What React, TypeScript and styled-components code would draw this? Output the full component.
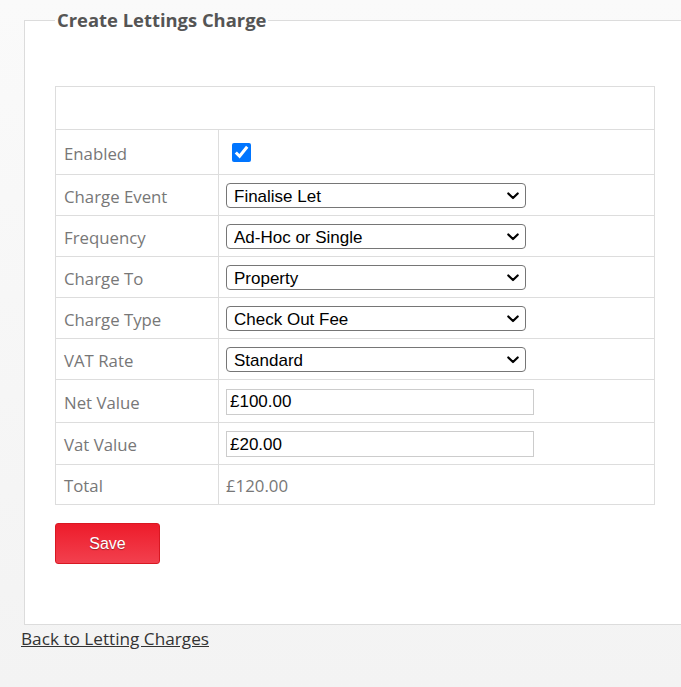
import React from "react";
import styled, { createGlobalStyle } from "styled-components";

const Global = createGlobalStyle`
  html, body { margin: 0; padding: 0; }
  body {
    background: linear-gradient(#fafafa 0px, #f3f3f3 687px);
    min-height: 687px;
    overflow: hidden;
    font-family: "Segoe UI", "Open Sans", sans-serif;
  }
`;

const Page = styled.div`
  padding: 8px 0 0 21px;
  width: 720px;
`;

const Fieldset = styled.fieldset`
  margin: 0 0 0 3px;
  padding: 54px 30px 60px 30px;
  border: 1px solid #dcdcdc;
  background: #fff;
  width: 660px;
  box-sizing: border-box;
  min-height: 602px;
`;

const Legend = styled.legend`
  font-family: "Open Sans", sans-serif;
  font-weight: 700;
  font-size: 18.4px;
  color: #555;
  padding: 0 2px;
  line-height: 24px;
`;

const Table = styled.table`
  border-collapse: collapse;
  width: 600px;
  font-family: "Open Sans", sans-serif;
`;

const Row = styled.tr<{ $h: number }>`
  height: ${(p) => p.$h}px;
`;

const EmptyCell = styled.td`
  border: 1px solid #dddddd;
`;

const LabelCell = styled.td`
  border: 1px solid #dddddd;
  width: 146px;
  padding: 2px 8px 0;
  color: #777;
  font-size: 16.8px;
  vertical-align: middle;
`;

const ValueCell = styled.td`
  border: 1px solid #dddddd;
  padding: 1px 7px 0;
  color: #777;
  font-size: 16.8px;
  vertical-align: middle;
`;

const SelectWrap = styled.div`
  position: relative;
  width: 300px;
  height: 25px;
`;

const Select = styled.select`
  appearance: none;
  -webkit-appearance: none;
  width: 300px;
  height: 25px;
  box-sizing: border-box;
  border: 1px solid #767676;
  border-radius: 4px;
  background: #fff;
  padding: 1px 24px 0 7px;
  font-family: "Liberation Sans", Arial, sans-serif;
  font-size: 17px;
  color: #000;
  display: block;
  outline: none;
`;

const Chevron = styled.svg`
  position: absolute;
  right: 7px;
  top: 9px;
  width: 12px;
  height: 8px;
  pointer-events: none;
`;

const Input = styled.input`
  width: 308px;
  height: 26px;
  box-sizing: border-box;
  border: 1px solid #cccccc;
  font-family: "Liberation Sans", Arial, sans-serif;
  font-size: 17px;
  color: #000;
  padding: 1px 3px 0;
  display: block;
  outline: none;
`;

const Check = styled.input`
  width: 19px;
  height: 19px;
  margin: 0 0 0 6px;
  display: block;
`;

const SaveButton = styled.button`
  margin-top: 18px;
  width: 105px;
  height: 41px;
  border: 1px solid #d81822;
  border-radius: 3px;
  background: linear-gradient(#ed1c2b, #f2404e);
  color: #fff;
  font-family: "Liberation Sans", Arial, sans-serif;
  font-size: 16px;
  text-shadow: 0 1px 1px rgba(0, 0, 0, 0.35);
  cursor: pointer;
`;

const BackLink = styled.a`
  display: inline-block;
  margin-top: 2px;
  font-family: "Open Sans", sans-serif;
  font-size: 17.2px;
  color: #333;
  text-decoration: underline;
`;

const selects: [string, string][] = [
  ["Charge Event", "Finalise Let"],
  ["Frequency", "Ad-Hoc or Single"],
  ["Charge To", "Property"],
  ["Charge Type", "Check Out Fee"],
  ["VAT Rate", "Standard"],
];

export default function App() {
  return (
    <>
      <Global />
      <Page>
        <Fieldset>
          <Legend>Create Lettings Charge</Legend>
          <Table>
            <tbody>
              <Row $h={43}>
                <EmptyCell colSpan={2} />
              </Row>
              <Row $h={45}>
                <LabelCell>Enabled</LabelCell>
                <ValueCell>
                  <Check type="checkbox" defaultChecked />
                </ValueCell>
              </Row>
              {selects.map(([label, value]) => (
                <Row $h={41} key={label}>
                  <LabelCell>{label}</LabelCell>
                  <ValueCell>
                    <SelectWrap>
                      <Select defaultValue={value}>
                        <option>{value}</option>
                      </Select>
                      <Chevron viewBox="0 0 12 8">
                        <path
                          d="M1.3 1.5 L6 6 L10.7 1.5"
                          fill="none"
                          stroke="#000"
                          strokeWidth="2.2"
                          strokeLinecap="round"
                          strokeLinejoin="round"
                        />
                      </Chevron>
                    </SelectWrap>
                  </ValueCell>
                </Row>
              ))}
              <Row $h={43}>
                <LabelCell>Net Value</LabelCell>
                <ValueCell>
                  <Input defaultValue="£100.00" />
                </ValueCell>
              </Row>
              <Row $h={42}>
                <LabelCell>Vat Value</LabelCell>
                <ValueCell>
                  <Input defaultValue="£20.00" />
                </ValueCell>
              </Row>
              <Row $h={40}>
                <LabelCell>Total</LabelCell>
                <ValueCell>£120.00</ValueCell>
              </Row>
            </tbody>
          </Table>
          <SaveButton>Save</SaveButton>
        </Fieldset>
        <BackLink href="#">Back to Letting Charges</BackLink>
      </Page>
    </>
  );
}
